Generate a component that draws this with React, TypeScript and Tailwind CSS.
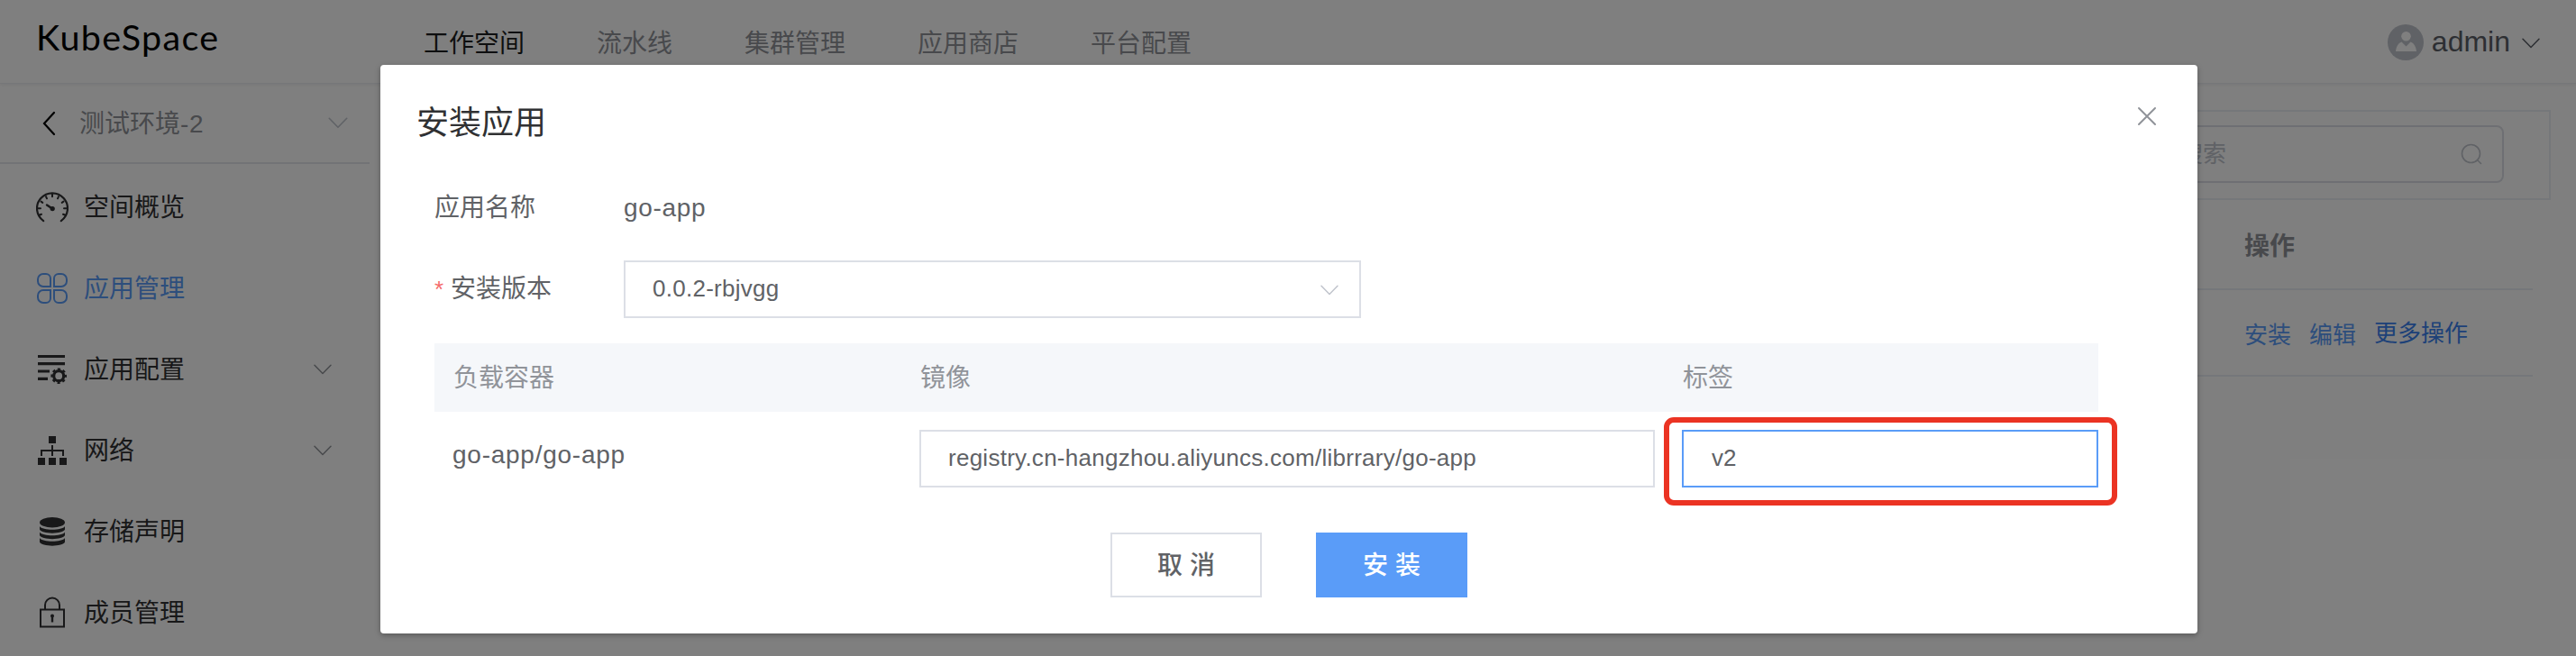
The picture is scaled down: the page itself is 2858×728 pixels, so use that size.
import React from "react";

function Chevron({ w, stroke, className = "" }: { w: number; stroke: string; className?: string }) {
  return (
    <svg width={w} height={w / 2 + 2} viewBox="0 0 20 12" fill="none" className={className}>
      <path d="M1 1.2 L10 10.4 L19 1.2" stroke={stroke} strokeWidth="1.5" strokeLinecap="round" strokeLinejoin="round" />
    </svg>
  );
}

const DashboardIcon = () => (
  <svg width="36" height="36" viewBox="0 0 36 36" fill="none" stroke="#303133" strokeWidth="2.2" strokeLinecap="round">
    <g transform="translate(0 1.6)">
      <path d="M8.2 31.6 A17 17 0 1 1 27.8 31.6" />
      <path
        d="M18 2v2.600M11 4.500l1 2.200M25 4.500l-1 2.200M5.500 10l1.800 1.300M30.500 10l-1.800 1.300M2 17.700h3M34 17.700h-3M3.500 25.200l2.500-1M32.500 25.200l-2.500-1"
        strokeWidth="2"
      />
      <path d="M12 13.800L18 18" strokeWidth="2.400" />
      <circle cx="18.200" cy="18" r="1.900" fill="#303133" strokeWidth="1.500" />
    </g>
  </svg>
);

const AppsIcon = () => (
  <svg width="36" height="36" viewBox="0 0 36 36" fill="none" stroke="#5a9cf8" strokeWidth="2">
    <path d="M8 2h3a5 5 0 0 1 5 5v9H8a6 6 0 0 1-6-6V8a6 6 0 0 1 6-6z" />
    <path d="M25 2h3a6 6 0 0 1 6 6v2a6 6 0 0 1-6 6h-8V7a5 5 0 0 1 5-5z" />
    <path d="M8 20h8v9a5 5 0 0 1-5 5H8a6 6 0 0 1-6-6v-2a6 6 0 0 1 6-6z" />
    <path d="M20 20h8a6 6 0 0 1 6 6v2a6 6 0 0 1-6 6h-3a5 5 0 0 1-5-5z" />
  </svg>
);

const ConfigIcon = () => (
  <svg width="36" height="36" viewBox="0 0 36 36" fill="#303133">
    <path d="M2 1.900h30v3.200H2zM2 10.100h30v3.200H2zM2 18.400h13v3.200H2zM2 26.800h11V30H2z" />
    <circle cx="25.200" cy="25.200" r="5.500" fill="none" stroke="#303133" strokeWidth="3.200" />
    <circle cx="25.200" cy="25.200" r="7.700" fill="none" stroke="#303133" strokeWidth="2.200" strokeDasharray="3.200 2.848" strokeDashoffset="1.600" />
  </svg>
);

const NetworkIcon = () => (
  <svg width="36" height="36" viewBox="0 0 36 36" fill="#303133">
    <path d="M14 2h8v8h-8zM2 26h8v8H2zM14 26h8v8h-8zM26 26h8v8h-8z" />
    <path d="M18 12v12M6 24v-6h24v6" fill="none" stroke="#303133" strokeWidth="2" />
  </svg>
);

const StorageIcon = () => (
  <svg width="36" height="36" viewBox="0 0 36 36" fill="#303133">
    <ellipse cx="18" cy="7.700" rx="14" ry="5.700" />
    <path d="M4 12c3 5 25 5 28 0v3.500c-2 5.500-26 5.500-28 0z" />
    <path d="M4 18.500c3 5 25 5 28 0V22c-2 5.500-26 5.500-28 0z" />
    <path d="M4 25c3 5 25 5 28 0v4.500c-2 5.500-26 5.500-28 0z" />
  </svg>
);

const LockIcon = () => (
  <svg width="36" height="36" viewBox="0 0 36 36" fill="none" stroke="#303133" strokeWidth="2">
    <path d="M5 14.500h26v19H5z" />
    <path d="M10 14v-4.500a8 8 0 0 1 16 0V14" />
    <path d="M18 21v7.500" strokeWidth="2.400" />
    <circle cx="18" cy="21.500" r="2" fill="#303133" stroke="none" />
  </svg>
);

const menu = [
  { label: "空间概览", icon: <DashboardIcon /> },
  { label: "应用管理", icon: <AppsIcon />, active: true },
  { label: "应用配置", icon: <ConfigIcon />, sub: true },
  { label: "网络", icon: <NetworkIcon />, sub: true },
  { label: "存储声明", icon: <StorageIcon /> },
  { label: "成员管理", icon: <LockIcon /> },
];

function Header() {
  return (
    <header className="relative z-10 flex h-[93px] shrink-0 items-center border-b border-[#eceef2] bg-white pt-[2px] shadow-[0_1px_4px_rgba(0,21,41,0.08)]">
      <div className="w-[470px] pb-[12px] pl-[40px] font-['Lato'] text-[39.500px] leading-[48px] tracking-[1.300px] text-black">
        KubeSpace
      </div>
      <nav className="flex gap-[80px] pt-[3px] text-[28px] leading-[40px] text-[#909399]">
        <span className="text-[#1d1e20]">工作空间</span>
        <span>流水线</span>
        <span>集群管理</span>
        <span>应用商店</span>
        <span>平台配置</span>
      </nav>
      <div className="ml-auto flex items-center pr-[40px]">
        <svg width="40" height="40" viewBox="0 0 40 40">
          <circle cx="20" cy="20" r="20" fill="#c0c4cc" />
          <circle cx="20.500" cy="13.300" r="5.300" fill="#fff" />
          <path d="M9 30c.5-5 2.500-9 6.500-10.500l5 5 5-5C29.500 21 31.500 25 32 30z" fill="#fff" />
        </svg>
        <span className="-mt-[2px] ml-[9px] text-[32px] leading-[40px] text-[#5a5e66]">admin</span>
        <Chevron w={20} stroke="#5a5e66" className="ml-[13px] mt-[2px]" />
      </div>
    </header>
  );
}

function Sidebar() {
  return (
    <aside className="h-full w-[410px] shrink-0 bg-white shadow-[1px_0_4px_rgba(0,21,41,0.1)]">
      <div className="flex h-[89px] items-center border-b-2 border-[#e4e7ed] pl-[46px] pr-[24px]">
        <svg width="16" height="28" viewBox="0 0 16 28" fill="none">
          <path d="M14 2L3 14l11 12" stroke="#000" strokeWidth="2.200" strokeLinecap="round" />
        </svg>
        <span className="ml-[26px] pt-[2px] text-[28px] leading-[40px] text-[#909399]">
          测试环境<span className="tracking-[0.700px]">-2</span>
        </span>
        <Chevron w={22} stroke="#c0c4cc" className="ml-auto" />
      </div>
      <ul className="pt-[3px]">
        {menu.map((m) => (
          <li key={m.label} className="flex h-[90px] items-center pl-[40px] pr-[42px]">
            {m.icon}
            <span
              className={`ml-[17px] pt-[1px] text-[28px] leading-[40px] ${m.active ? "text-[#5a9cf8]" : "text-[#303133]"}`}
            >
              {m.label}
            </span>
            {m.sub && <Chevron w={20} stroke="#909399" className="ml-auto" />}
          </li>
        ))}
      </ul>
    </aside>
  );
}

function Content() {
  return (
    <main className="flex grow flex-col bg-white pl-[20px] pr-[28px] pt-[29px]">
      <div className="flex h-[100px] items-center justify-end border-2 border-[#ebeef5] pr-[50px]">
        <div className="-mt-[2px] flex h-[64px] w-[440px] items-center justify-between rounded-[8px] border-2 border-[#dcdfe6] pl-[26px] pr-[22px]">
          <span className="text-[26px] leading-[36px] text-[#c0c4cc]">应用搜索</span>
          <svg width="24" height="24" viewBox="0 0 24 24" fill="none" stroke="#c0c4cc" strokeWidth="1.600" strokeLinecap="round">
            <circle cx="11.500" cy="11.500" r="10" />
            <path d="M18.500 18.500l4 4" />
          </svg>
        </div>
      </div>
      <div className="mr-[20px] flex h-[100px] items-center border-b-2 border-[#ebeef5] pt-[6px]">
        <span className="ml-auto w-[320px] text-[28px] font-bold leading-[40px] text-[#909399]">操作</span>
      </div>
      <div className="mr-[20px] flex h-[96px] items-center border-b-2 border-[#ebeef5] pt-[6px]">
        <div className="ml-auto flex w-[320px] gap-[20px] text-[26px] leading-[36px] text-[#5a9cf8]">
          <span>安装</span>
          <span>编辑</span>
          <span className="-mt-[2px] text-[#3a82f0]">更多操作</span>
        </div>
      </div>
    </main>
  );
}

function Dialog() {
  return (
    <section className="absolute left-[422px] top-[72px] h-[631px] w-[2016px] rounded-[4px] bg-white shadow-[0_2px_6px_rgba(0,0,0,0.3)]">
      <div className="flex h-[128px] items-start justify-between pl-[40px] pr-[45px] pt-[41px]">
        <h2 className="text-[36px] leading-[48px] text-[#303133]">安装应用</h2>
        <svg width="22" height="22" viewBox="0 0 22 22" fill="none" className="mt-[5px]">
          <path d="M2 2l18 18M20 2L2 20" stroke="#909399" strokeWidth="2" strokeLinecap="round" />
        </svg>
      </div>
      <div className="pl-[60px] text-[28px] leading-[40px] text-[#606266]">
        <div className="flex h-[60px] items-center pt-[2px]">
          <span className="w-[210px]">应用名称</span>
          <span className="tracking-[0.700px]">go-app</span>
        </div>
        <div className="mt-[29px] flex h-[64px] items-center">
          <span className="w-[18px] text-[26px] text-[#f56c6c]">*</span>
          <span className="w-[192px]">安装版本</span>
          <div className="flex h-full w-[818px] items-center justify-between border-2 border-[#dcdfe6] pl-[30px] pr-[23px]">
            <span className="-mt-[2px] text-[26px] tracking-[0.260px]">0.0.2-rbjvgg</span>
            <Chevron w={20} stroke="#c0c4cc" className="mt-[2px]" />
          </div>
        </div>
        <div className="mt-[28px] grid h-[76px] w-[1846px] grid-cols-[538px_846px_462px] items-center bg-[#f5f7fa] pt-[2px] text-[#909399]">
          <span className="pl-[21px]">负载容器</span>
          <span className="pl-[1px]">镜像</span>
          <span className="pl-[1px]">标签</span>
        </div>
        <div className="mt-[20px] grid h-[64px] w-[1846px] grid-cols-[538px_846px_462px]">
          <span className="pl-[20px] pt-[8px] tracking-[0.750px]">go-app/go-app</span>
          <div className="flex w-[816px] items-center border-2 border-[#dcdfe6] pb-[2px] pl-[30px] text-[26px] tracking-[0.260px]">
            registry.cn-hangzhou.aliyuncs.com/librrary/go-app
          </div>
          <div className="relative flex items-center border-2 border-[#5a9cf8] pb-[2px] pl-[31px] text-[26px]">
            v2
            <div className="absolute -left-[22px] -top-[16px] h-[98px] w-[503px] rounded-[11px] border-[6px] border-[#eb3323]" />
          </div>
        </div>
      </div>
      <div className="mt-[50px] flex justify-center gap-[60px] text-[28px] font-medium leading-[40px]">
        <button className="h-[72px] w-[168px] border-2 border-[#dcdfe6] pt-[1px] text-[#606266]">取 消</button>
        <button className="h-[72px] w-[168px] bg-[#5a9cf8] pt-[1px] text-white">安 装</button>
      </div>
    </section>
  );
}

export default function App() {
  return (
    <div className="relative flex h-[728px] w-[2858px] flex-col overflow-hidden bg-white font-['Liberation_Sans','Noto_Sans_CJK_SC',sans-serif]">
      <Header />
      <div className="flex min-h-0 grow">
        <Sidebar />
        <Content />
      </div>
      <div className="absolute inset-0 z-20 bg-black/50">
        <Dialog />
      </div>
    </div>
  );
}
